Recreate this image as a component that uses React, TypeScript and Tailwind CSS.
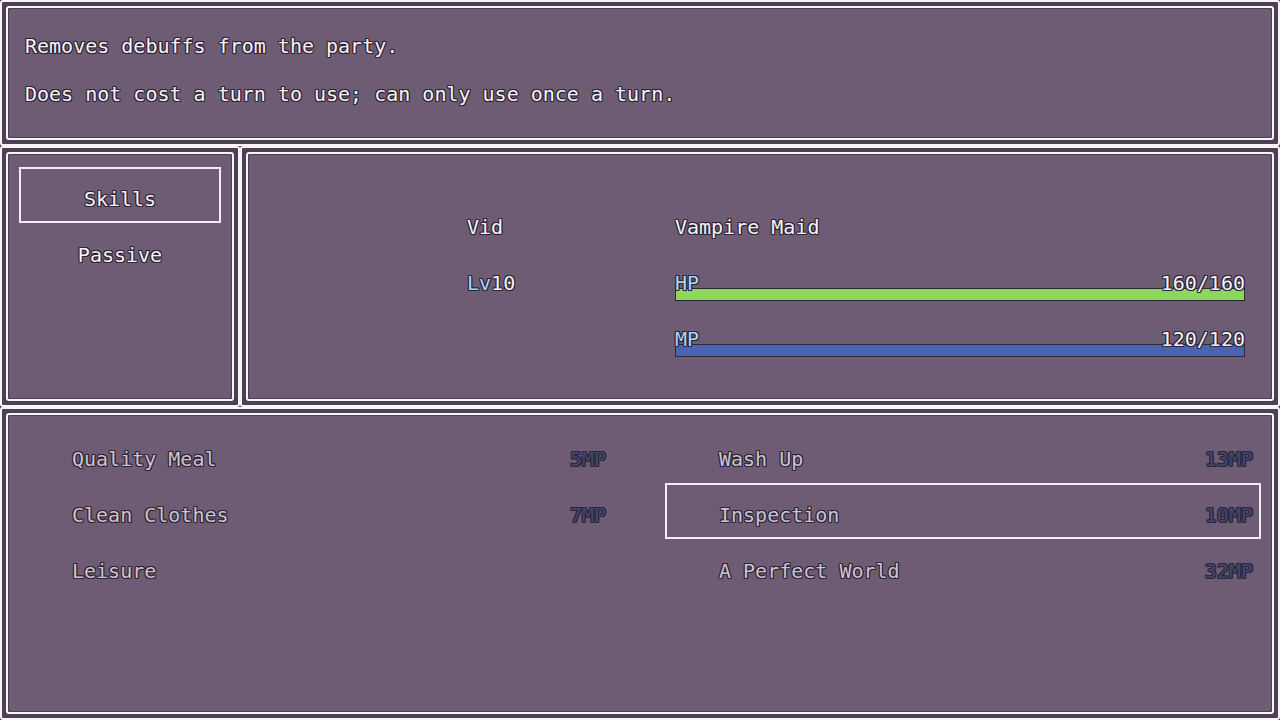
import type { ReactNode } from "react";
import clsx from "clsx";

const outline =
  "[text-shadow:1px_0_0_#2e2636,-1px_0_0_#2e2636,0_1px_0_#2e2636,0_-1px_0_#2e2636,1px_1px_0_#2e2636,-1px_-1px_0_#2e2636,1px_-1px_0_#2e2636,-1px_1px_0_#2e2636]";

// Double-lined window skin: outer line, dark gap, inner line, purple body.
function Frame({ className, children }: { className?: string; children?: ReactNode }) {
  return (
    <div className={clsx("border-2 border-[#f8f3f9] bg-[#4b4251] p-[4px] rounded-[3px]", className)}>
      <div className="h-full border-2 border-[#f8f3f9] bg-[#4b4251] p-[1px] rounded-[3px]">
        <div className="h-full bg-[#6e5b74] rounded-[2px]">{children}</div>
      </div>
    </div>
  );
}

const skills = [
  { name: "Quality Meal", cost: "5MP" },
  { name: "Wash Up", cost: "13MP" },
  { name: "Clean Clothes", cost: "7MP" },
  { name: "Inspection", cost: "10MP", selected: true },
  { name: "Leisure", cost: "" },
  { name: "A Perfect World", cost: "32MP" },
];

function Gauge({ label, value, bar }: { label: string; value: string; bar: string }) {
  return (
    <div className="relative h-[56px] flex flex-col justify-end pb-[6px]">
      <div className={clsx("h-[13px] border border-[#2c2834]", bar)} />
      <div className="absolute inset-0 flex justify-between pt-[8px] leading-[48px]">
        <span className="text-[#a6d6f6]">{label}</span>
        <span className="text-[#f4f0f4]">{value}</span>
      </div>
    </div>
  );
}

export default function App() {
  return (
    <div
      className={clsx(
        "w-[1280px] h-[720px] bg-[#4b4251] flex flex-col overflow-hidden font-['DejaVu_Sans_Mono',monospace] text-[20px] text-[#f6f2f6]",
        outline
      )}
    >
      <Frame className="h-[146px] shrink-0">
        <div className="pl-[16px] pt-[13px] leading-[48px]">
          <p>Removes debuffs from the party.</p>
          <p>Does not cost a turn to use; can only use once a turn.</p>
        </div>
      </Frame>

      <div className="flex h-[261px] shrink-0">
        <Frame className="w-[240px] shrink-0">
          <div className="px-[10px] pt-[12px]">
            <div className="h-[56px] border-2 border-[#f3ebf5] pt-[6px] leading-[48px] text-center">Skills</div>
            <div className="h-[56px] border-2 border-transparent pt-[6px] leading-[48px] text-center">Passive</div>
          </div>
        </Frame>
        <Frame className="flex-1">
          <div className="flex pl-[218px] pr-[26px] pt-[40px]">
            <div className="w-[208px] shrink-0">
              <div className="h-[56px] pt-[8px] leading-[48px]">Vid</div>
              <div className="h-[56px] pt-[8px] leading-[48px]">
                <span className="text-[#a6d6f6]">Lv</span>10
              </div>
            </div>
            <div className="flex-1">
              <div className="h-[56px] pt-[8px] leading-[48px]">Vampire Maid</div>
              <Gauge label="HP" value="160/160" bar="bg-[#8fd65d]" />
              <Gauge label="MP" value="120/120" bar="bg-[#4b63b3]" />
            </div>
          </div>
        </Frame>
      </div>

      <Frame className="flex-1">
        <div className="grid grid-cols-[596px_596px] gap-x-[51px] pl-[9px] pt-[11px]">
          {skills.map((s) => (
            <div
              key={s.name}
              className={clsx(
                "h-[56px] border-2 pt-[6px] leading-[48px] flex justify-between pl-[52px] pr-[6px]",
                s.selected ? "border-[#f3ebf5]" : "border-transparent"
              )}
            >
              <span className="text-[#cbc3ce]">{s.name}</span>
              <span className="text-[#414774]">{s.cost}</span>
            </div>
          ))}
        </div>
      </Frame>
    </div>
  );
}
